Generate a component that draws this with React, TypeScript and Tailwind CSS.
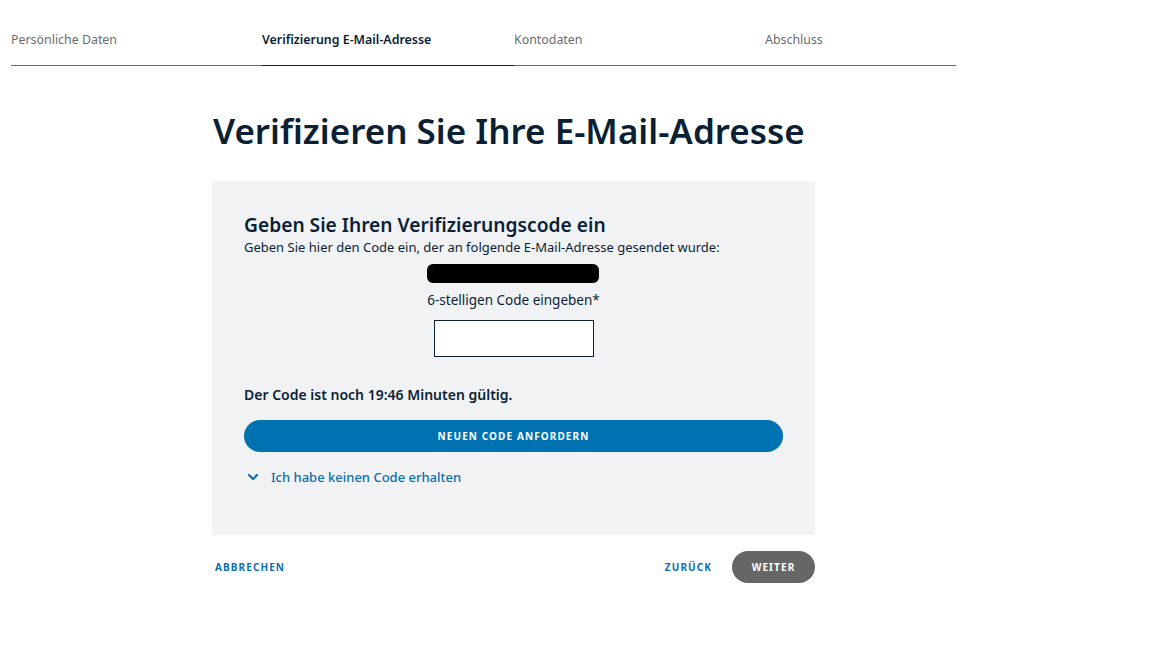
import { ChevronDown } from 'lucide-react';

const steps = [
  { label: 'Persönliche Daten', width: 'w-[251px]', active: false },
  { label: 'Verifizierung E-Mail-Adresse', width: 'w-[252px]', active: true },
  { label: 'Kontodaten', width: 'w-[251px]', active: false },
  { label: 'Abschluss', width: 'w-[191px]', active: false },
];

function StepBar() {
  return (
    <div className="flex pl-[11px]">
      {steps.map((s) => (
        <div
          key={s.label}
          className={`${s.width} h-[66px] pt-[31px] border-b ${
            s.active ? 'border-[#0b1f35]' : 'border-[#6b6b6b]'
          }`}
        >
          <span
            className={`block text-[12.4px] leading-[18px] ${
              s.active ? 'font-semibold text-[#0b1f35]' : 'text-[#6b6b6b]'
            }`}
          >
            {s.label}
          </span>
        </div>
      ))}
    </div>
  );
}

export default function App() {
  return (
    <div
      className="min-h-screen bg-white"
      style={{ fontFamily: '"Noto Sans", "Open Sans", Arial, sans-serif' }}
    >
      <StepBar />

      <div className="w-[603px] ml-[212px]">
        <h1 className="mt-[43px] text-[35px] leading-[44px] font-semibold text-[#0b1f35] pl-px">
          Verifizieren Sie Ihre E-Mail-Adresse
        </h1>

        {/* Code card */}
        <div className="mt-[28px] bg-[#f1f2f4] px-[32px] pt-[31px] pb-[49px]">
          <h2 className="text-[19.2px] leading-[26px] font-semibold text-[#0b1f35]">
            Geben Sie Ihren Verifizierungscode ein
          </h2>
          <p className="text-[13px] leading-[18px] text-[#0b1f35]">
            Geben Sie hier den Code ein, der an folgende E-Mail-Adresse gesendet wurde:
          </p>

          <div className="flex flex-col items-center">
            <div className="mt-[8px] ml-[-2px] w-[172px] h-[19px] bg-black rounded-[6px]" />
            <label className="mt-[8px] text-[13.5px] leading-[18px] text-[#0b1f35]">
              6-stelligen Code eingeben*
            </label>
            <input
              type="text"
              className="mt-[11px] w-[160px] h-[37px] bg-white border border-[#0b1f35] outline-none"
            />
          </div>

          <p className="mt-[29px] text-[14px] leading-[18px] font-semibold text-[#0b1f35]">
            Der Code ist noch 19:46 Minuten gültig.
          </p>

          <button className="mt-[16px] w-full h-[32px] rounded-full bg-[#0072b1] text-white text-[10px] font-bold tracking-[1.1px]">
            NEUEN CODE ANFORDERN
          </button>

          <button className="mt-[16px] flex items-center gap-[10px] text-[13px] leading-[18px] font-medium text-[#0a6fae]">
            <ChevronDown size={16} strokeWidth={3.2} className="ml-[1px]" />
            Ich habe keinen Code erhalten
          </button>
        </div>

        {/* Footer actions */}
        <div className="mt-[16px] flex items-center justify-between">
          <button className="ml-[3px] text-[10px] font-bold tracking-[1.1px] text-[#0a6fae]">
            ABBRECHEN
          </button>
          <div className="flex items-center gap-[20px]">
            <button className="text-[10px] font-bold tracking-[1.1px] text-[#0a6fae]">
              ZURÜCK
            </button>
            <button className="w-[83px] h-[32px] rounded-full bg-[#666666] text-white text-[10px] font-bold tracking-[1.1px]">
              WEITER
            </button>
          </div>
        </div>
      </div>
    </div>
  );
}
